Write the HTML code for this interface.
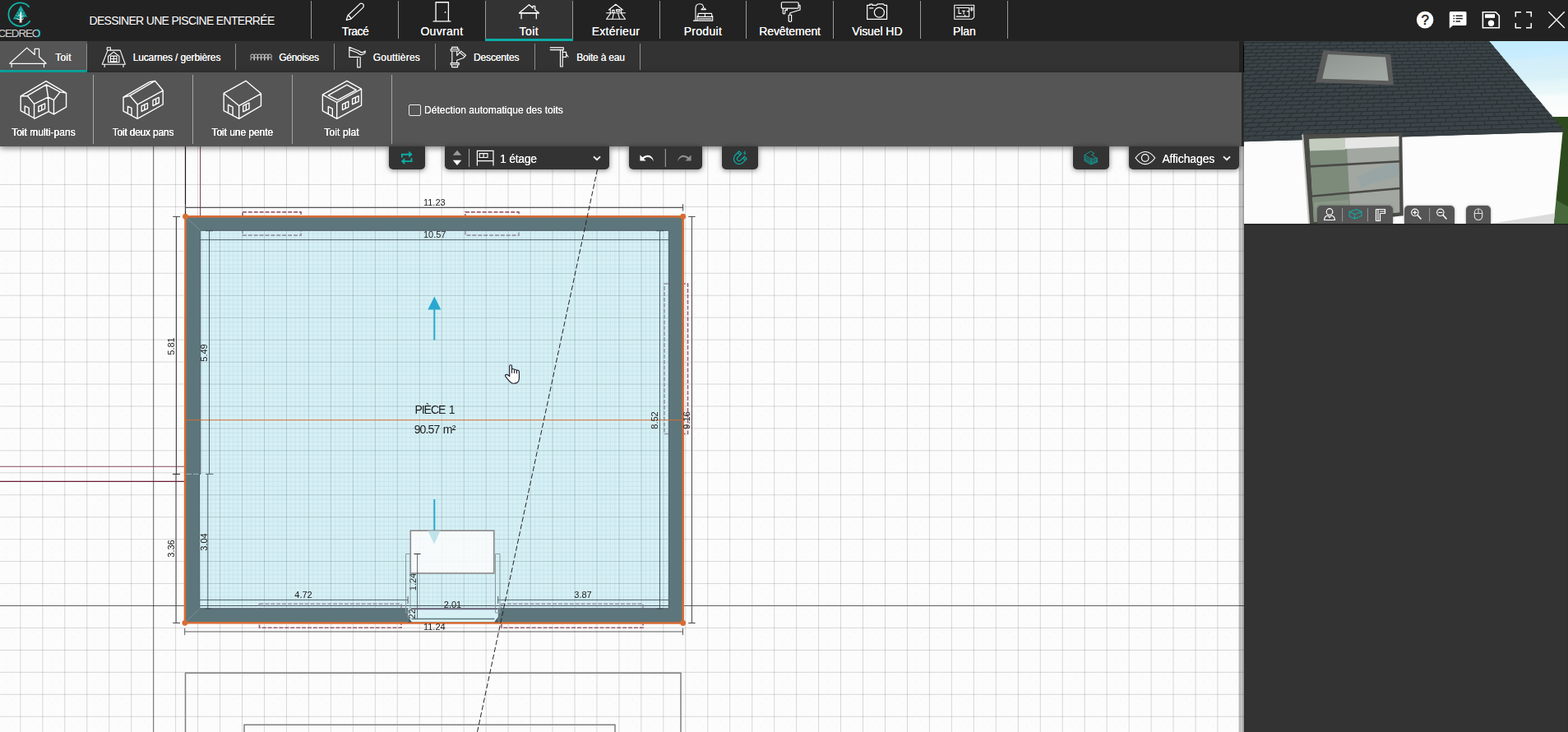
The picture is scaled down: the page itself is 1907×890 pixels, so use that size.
<!DOCTYPE html>
<html lang="fr">
<head>
<meta charset="utf-8">
<title>Cedreo - Dessiner une piscine enterrée</title>
<style>
*{box-sizing:border-box;margin:0;padding:0}
html,body{width:1907px;height:890px;overflow:hidden;background:#fcfcfc;font-family:"Liberation Sans",sans-serif;color:#fff}
.abs{position:absolute}
#canvas{position:absolute;left:0;top:0;width:1907px;height:890px;will-change:transform}
#topbar{position:absolute;left:0;top:0;width:1907px;height:50px;background:#222}
#subbar{position:absolute;left:0;top:50px;width:1507px;height:38px;background:#333}
#toolbar{position:absolute;left:0;top:88px;width:1510px;height:90px;background:#555;box-shadow:0 2px 7px rgba(0,0,0,.5)}
#side{position:absolute;left:1513px;top:272px;width:394px;height:618px;background:#333;box-shadow:inset 0 2px 2px -1px rgba(0,0,0,.5)}
#view3d{position:absolute;left:1513px;top:50px;width:394px;height:222px;overflow:hidden;background:#fdfdfd}
.sep{position:absolute;width:1px;background:#9a9a9a}
.tab{position:absolute;top:0;height:50px;width:106px;text-align:center}
.tab .lbl{position:absolute;left:0;right:0;top:30px;font-size:13.5px;line-height:16px;letter-spacing:-.2px;white-space:nowrap;text-shadow:0 0 .6px #fff}
.tab svg{position:absolute;left:50%;top:2px;margin-left:-14px}
.tab.on{background:#333;border-bottom:3px solid #0ba5a0}
#title{position:absolute;left:109px;top:16px;font-size:14px;line-height:18px;white-space:nowrap;letter-spacing:-.55px}
.stab{position:absolute;top:50px;height:38px}
.stab .lbl{position:absolute;top:12px;font-size:11.5px;line-height:15px;white-space:nowrap;letter-spacing:-.3px;text-shadow:0 0 .5px #fff}
.stab.on{background:#555;border-bottom:3px solid #0ba5a0}
.item{position:absolute;top:88px;height:90px;text-align:center}
.item .lbl{position:absolute;left:0;right:0;top:153px;font-size:11.5px;line-height:15px;white-space:nowrap;letter-spacing:-.35px;text-shadow:0 0 .5px #fff}
.fbtn{position:absolute;top:178px;height:28px;background:#333;border-radius:0 0 5px 5px;box-shadow:0 1px 6px rgba(0,0,0,.5)}
.vbtn{position:absolute;top:200px;height:22px;background:#555;border-radius:5px 5px 0 0;box-shadow:0 0 3px rgba(0,0,0,.4)}
</style>
</head>
<body>
<svg id="canvas" viewBox="0 0 1907 890" font-family="Liberation Sans, sans-serif">
<rect x="0" y="0" width="1907" height="890" fill="#fcfcfc"/>
<defs><pattern id="dots" x="186.65" y="736.5" width="26.965" height="26.95" patternUnits="userSpaceOnUse"><path d="M10.3 10.8h1v1h-1zM21.1 10.8h1v1h-1zM10.300 21.600h1v1h-1zM15.700 5.400h1v1h-1z" fill="#000" fill-opacity=".06"/></pattern></defs>
<rect x="0" y="178" width="1507" height="712" fill="url(#dots)"/>
<path d="M-2.10 178V890M24.86 178V890M51.83 178V890M78.79 178V890M105.76 178V890M132.72 178V890M159.69 178V890M213.62 178V890M240.58 178V890M267.55 178V890M294.51 178V890M321.48 178V890M348.44 178V890M375.40 178V890M402.37 178V890M429.34 178V890M456.30 178V890M483.26 178V890M510.23 178V890M537.20 178V890M564.16 178V890M591.12 178V890M618.09 178V890M645.05 178V890M672.02 178V890M698.99 178V890M725.95 178V890M752.91 178V890M779.88 178V890M806.85 178V890M833.81 178V890M860.77 178V890M887.74 178V890M914.70 178V890M941.67 178V890M968.63 178V890M995.60 178V890M1022.56 178V890M1049.53 178V890M1076.50 178V890M1103.46 178V890M1130.42 178V890M1157.39 178V890M1184.36 178V890M1211.32 178V890M1238.29 178V890M1265.25 178V890M1292.22 178V890M1319.18 178V890M1346.14 178V890M1373.11 178V890M1400.08 178V890M1427.04 178V890M1454.01 178V890M1480.97 178V890M1507.94 178V890M1534.90 178V890M0 170.55H1513M0 224.45H1513M0 251.40H1513M0 278.35H1513M0 305.30H1513M0 332.25H1513M0 359.20H1513M0 386.15H1513M0 413.10H1513M0 440.05H1513M0 467.00H1513M0 493.95H1513M0 520.90H1513M0 547.85H1513M0 574.80H1513M0 601.75H1513M0 628.70H1513M0 655.65H1513M0 682.60H1513M0 709.55H1513M0 763.45H1513M0 790.40H1513M0 817.35H1513M0 844.30H1513M0 871.25H1513M0 898.20H1513" stroke="#000" stroke-opacity=".145" stroke-width="1" fill="none"/>
<path d="M186.70 178V890M0 736.50H1513" stroke="#000" stroke-opacity=".62" stroke-width="1" fill="none"/>
<rect x="295" y="257.9" width="71.1" height="28.2" fill="none" stroke="#8a4a66" stroke-opacity=".88" stroke-width="1.6" stroke-dasharray="4.9 2"/><rect x="566" y="257.9" width="65.0" height="28.2" fill="none" stroke="#8a4a66" stroke-opacity=".88" stroke-width="1.6" stroke-dasharray="4.9 2"/><rect x="808" y="345" width="28.5" height="182.5" fill="none" stroke="#8a4a66" stroke-opacity=".88" stroke-width="1.6" stroke-dasharray="4.9 2"/><rect x="315.5" y="734.3" width="172.5" height="28.9" fill="none" stroke="#8a4a66" stroke-opacity=".88" stroke-width="1.6" stroke-dasharray="4.9 2"/><rect x="610" y="734.3" width="172.0" height="28.9" fill="none" stroke="#8a4a66" stroke-opacity=".88" stroke-width="1.6" stroke-dasharray="4.9 2"/>
<defs><clipPath id="rc"><polygon points="243.7,280.3 813.4,280.3 813.4,739.8 242.8,739.8 242.6,576.4 243.8,576.4"/></clipPath></defs>
<polygon points="243.7,280.3 813.4,280.3 813.4,739.8 242.8,739.8 242.6,576.4 243.8,576.4" fill="#d6f0f5"/>
<path clip-path="url(#rc)" d="M235.17 280V740M245.96 280V740M251.35 280V740M256.75 280V740M262.14 280V740M272.93 280V740M278.32 280V740M283.72 280V740M289.11 280V740M299.90 280V740M305.29 280V740M310.69 280V740M316.08 280V740M326.87 280V740M332.27 280V740M337.66 280V740M343.06 280V740M353.84 280V740M359.24 280V740M364.63 280V740M370.03 280V740M380.82 280V740M386.21 280V740M391.61 280V740M397.00 280V740M407.79 280V740M413.18 280V740M418.58 280V740M423.97 280V740M434.76 280V740M440.15 280V740M445.55 280V740M450.94 280V740M461.73 280V740M467.13 280V740M472.52 280V740M477.92 280V740M488.70 280V740M494.10 280V740M499.49 280V740M504.89 280V740M515.68 280V740M521.07 280V740M526.47 280V740M531.86 280V740M542.65 280V740M548.04 280V740M553.44 280V740M558.83 280V740M569.62 280V740M575.01 280V740M580.41 280V740M585.80 280V740M596.59 280V740M601.99 280V740M607.38 280V740M612.78 280V740M623.56 280V740M628.96 280V740M634.35 280V740M639.75 280V740M650.54 280V740M655.93 280V740M661.33 280V740M666.72 280V740M677.51 280V740M682.90 280V740M688.30 280V740M693.69 280V740M704.48 280V740M709.87 280V740M715.27 280V740M720.66 280V740M731.45 280V740M736.85 280V740M742.24 280V740M747.64 280V740M758.42 280V740M763.82 280V740M769.21 280V740M774.61 280V740M785.40 280V740M790.79 280V740M796.19 280V740M801.58 280V740M812.37 280V740M817.76 280V740M242 283.99H814M242 289.37H814M242 294.76H814M242 300.14H814M242 310.92H814M242 316.30H814M242 321.69H814M242 327.07H814M242 337.85H814M242 343.23H814M242 348.62H814M242 354.00H814M242 364.78H814M242 370.16H814M242 375.55H814M242 380.93H814M242 391.71H814M242 397.09H814M242 402.48H814M242 407.86H814M242 418.64H814M242 424.02H814M242 429.41H814M242 434.79H814M242 445.57H814M242 450.95H814M242 456.34H814M242 461.72H814M242 472.50H814M242 477.88H814M242 483.27H814M242 488.65H814M242 499.43H814M242 504.81H814M242 510.20H814M242 515.58H814M242 526.36H814M242 531.74H814M242 537.13H814M242 542.51H814M242 553.29H814M242 558.67H814M242 564.06H814M242 569.44H814M242 580.22H814M242 585.60H814M242 590.99H814M242 596.37H814M242 607.15H814M242 612.53H814M242 617.92H814M242 623.30H814M242 634.08H814M242 639.46H814M242 644.85H814M242 650.23H814M242 661.01H814M242 666.39H814M242 671.78H814M242 677.16H814M242 687.94H814M242 693.32H814M242 698.71H814M242 704.09H814M242 714.87H814M242 720.25H814M242 725.64H814M242 731.02H814M242 741.80H814" stroke="#b4d6de" stroke-opacity=".34" stroke-width="1" fill="none"/>
<path clip-path="url(#rc)" d="M213.59 280V740M240.56 280V740M267.53 280V740M294.51 280V740M321.48 280V740M348.45 280V740M375.42 280V740M402.39 280V740M429.37 280V740M456.34 280V740M483.31 280V740M510.28 280V740M537.25 280V740M564.23 280V740M591.20 280V740M618.17 280V740M645.14 280V740M672.11 280V740M699.09 280V740M726.06 280V740M753.03 280V740M780.00 280V740M806.97 280V740M833.95 280V740M242 278.60H814M242 305.53H814M242 332.46H814M242 359.39H814M242 386.32H814M242 413.25H814M242 440.18H814M242 467.11H814M242 494.04H814M242 520.97H814M242 547.90H814M242 574.83H814M242 601.76H814M242 628.69H814M242 655.62H814M242 682.55H814M242 709.48H814M242 736.41H814M242 763.34H814" stroke="#62838a" stroke-opacity=".33" stroke-width="1" fill="none"/>
<path clip-path="url(#rc)" d="M242 736.50H814" stroke="#3f4f55" stroke-opacity=".9" stroke-width="1" fill="none"/>
<path d="M243.6 178V262M0 567.2H224" stroke="#86485f" stroke-width="1.1" fill="none"/><path d="M0 585.4H224" stroke="#6a1c36" stroke-width="1.2" fill="none"/>
<path d="M225.5 178V262" stroke="#2a0f1c" stroke-width="1.2" fill="none"/>
<path d="M225.5 891V818.3H828V891M297 891V881.3H748V891" stroke="#7f7f7f" stroke-width="1.5" fill="none"/>
<g clip-path="url(#rc)" opacity=".9"><rect x="295" y="257.9" width="71.1" height="28.2" fill="none" stroke="#887c96" stroke-opacity=".88" stroke-width="1.6" stroke-dasharray="4.9 2"/><rect x="566" y="257.9" width="65.0" height="28.2" fill="none" stroke="#887c96" stroke-opacity=".88" stroke-width="1.6" stroke-dasharray="4.9 2"/><rect x="808" y="345" width="28.5" height="182.5" fill="none" stroke="#887c96" stroke-opacity=".88" stroke-width="1.6" stroke-dasharray="4.9 2"/><rect x="315.5" y="734.3" width="172.5" height="28.9" fill="none" stroke="#887c96" stroke-opacity=".88" stroke-width="1.6" stroke-dasharray="4.9 2"/><rect x="610" y="734.3" width="172.0" height="28.9" fill="none" stroke="#887c96" stroke-opacity=".88" stroke-width="1.6" stroke-dasharray="4.9 2"/></g>
<path d="M225.5 263.2 L830.7 263.2 L830.7 757.5 L224.9 757.3 Z M243.7 280.3 L813.4 280.3 L813.4 739.8 L242.8 739.8 L242.6 576.4 L243.8 576.4 Z" fill="#5d767b" fill-rule="evenodd"/>
<polygon points="243.7,280.3 813.4,280.3 813.4,739.8 242.8,739.8 242.6,576.4 243.8,576.4" fill="none" stroke="#4d5a68" stroke-width="1"/>
<path d="M226 264L243.7 280.3M224.9 757.3L242.8 739.8" stroke="#8b9fa3" stroke-width=".6" fill="none"/>
<rect x="496.3" y="739.3" width="109.5" height="17" fill="#d6f0f5"/>
<polygon points="225.5,263.2 830.7,263.2 830.7,757.5 224.9,757.3" fill="none" stroke="#d96c33" stroke-width="2.5"/>
<circle cx="225.5" cy="263.2" r="3.4" fill="#d96c33"/>
<circle cx="830.7" cy="263.2" r="3.4" fill="#d96c33"/>
<circle cx="830.7" cy="757.5" r="3.4" fill="#d96c33"/>
<circle cx="224.9" cy="757.3" r="3.4" fill="#d96c33"/>
<path d="M226 510.8H830" stroke="#d96c33" stroke-width="1.1" fill="none"/>
<path d="M225.5 252.4H830.6M225.5 248.20000000000002v8.4M830.6 248.20000000000002v8.4" stroke="#444" stroke-width="1" fill="none"/>
<path d="M224.7 768.0H830.5M224.7 763.8v8.4M830.5 763.8v8.4" stroke="#5a5a5a" stroke-width="1" fill="none"/>
<path d="M214.5 263.4V576.4M214.5 263.4h0M214.5 576.4h0" stroke="#444" stroke-width="1" fill="none"/>
<path d="M214.1 576.4V757.4M214.1 576.4h0M214.1 757.4h0" stroke="#444" stroke-width="1" fill="none"/>
<path d="M210.2 263.4h8.8M210.2 757.4h8.8" stroke="#444" stroke-width="1" fill="none"/>
<path d="M841.4 263.4V757.5M837.1999999999999 263.4h8.4M837.1999999999999 757.5h8.4" stroke="#444" stroke-width="1" fill="none"/>
<path d="M210 576.4h9" stroke="#1c1c1c" stroke-width="1" fill="none"/><path d="M226.500 576.400H243.500" stroke="#a3b3b6" stroke-width="1" stroke-dasharray="6.500 2" fill="none"/>
<path d="M244 291.6H813M254.5 281V576M250 576.4h9.5M252.8 576.4V740M249 740.2h8M802.5 281V740M798.5 740.2h8M250 280.7h9M798 280.7h9" stroke="#3d4a55" stroke-opacity=".85" stroke-width="1" fill="none"/>
<path d="M243 729.4H496.1M605.7 729.4H813M496.1 725v9M605.7 725v9" stroke="#3d4a55" stroke-opacity=".85" stroke-width="1" fill="none"/>
<text x="528.3" y="250" font-size="11" text-anchor="middle" fill="#1c1c1c">11.23</text>
<text x="528.7" y="289" font-size="11" text-anchor="middle" fill="#1c1c1c">10.57</text>
<text x="528.3" y="766" font-size="11" text-anchor="middle" fill="#1c1c1c">11.24</text>
<text x="369" y="727" font-size="11" text-anchor="middle" fill="#1c1c1c">4.72</text>
<text x="709" y="727" font-size="11" text-anchor="middle" fill="#1c1c1c">3.87</text>
<text x="550.5" y="739" font-size="11" text-anchor="middle" fill="#1c1c1c">2.01</text>
<text x="212" y="421" font-size="11" text-anchor="middle" fill="#1c1c1c" transform="rotate(-90 212 421)">5.81</text>
<text x="252" y="429" font-size="11" text-anchor="middle" fill="#1c1c1c" transform="rotate(-90 252 429)">5.49</text>
<text x="212" y="667" font-size="11" text-anchor="middle" fill="#1c1c1c" transform="rotate(-90 212 667)">3.36</text>
<text x="251.5" y="659" font-size="11" text-anchor="middle" fill="#1c1c1c" transform="rotate(-90 251.5 659)">3.04</text>
<text x="800" y="511" font-size="11" text-anchor="middle" fill="#1c1c1c" transform="rotate(-90 800 511)">8.52</text>
<text x="839" y="511" font-size="11" text-anchor="middle" fill="#1c1c1c" transform="rotate(-90 839 511)">9.16</text>
<text x="505.5" y="707.5" font-size="11" text-anchor="middle" fill="#1c1c1c" transform="rotate(-90 505.5 707.5)">1.24</text>
<text x="505" y="748" font-size="11" text-anchor="middle" fill="#1c1c1c" transform="rotate(-90 505 748)">.22</text>
<text x="528.5" y="503" font-size="14" text-anchor="middle" fill="#1c1c1c" letter-spacing="-1.05" word-spacing="1.68">PIÈCE 1</text>
<text x="528.6" y="527.3" font-size="14" text-anchor="middle" fill="#1c1c1c" letter-spacing="-0.85" word-spacing="1.36">90.57 m²</text>
<path d="M528.3 413.5V375" stroke="#2aa7d0" stroke-width="2" fill="none"/><path d="M528.3 360.5L520.3 376.5H536.3Z" fill="#2aa7d0"/>
<path d="M528.3 607V645" stroke="#2aa7d0" stroke-width="2" fill="none"/>
<rect x="499.3" y="645.2" width="101.5" height="51.8" fill="#fcfcfc" fill-opacity=".88" stroke="#8a8a8a" stroke-width="1.6"/>
<path d="M520.5 645.5H535.5L528 661.5Z" fill="#bfe3ea"/>
<path d="M493.5 673.5h5.5V745h-5.5ZM602.5 673.5h5.5V745h-5.5Z" fill="none" stroke="#8a9a9e" stroke-width="1"/>
<path d="M507.5 673.5V752" stroke="#4d5a62" stroke-opacity=".85" stroke-width="1" fill="none"/><path d="M503.5 673.5h8M503.6 740.3h7.600" stroke="#2a3238" stroke-width="1" fill="none"/>
<path d="M500 740.3H605.5" stroke="#6a6478" stroke-width="2" fill="none"/>
<rect x="500.5" y="753" width="101" height="3" fill="#dcf6fa"/><path d="M500.5 752.500H601.500" stroke="#5d767b" stroke-width="1.400" fill="none"/><path d="M496.300 757L496.300 750L501 756.500ZM605.800 757V750L601 756.500Z" fill="#4a5a5f"/>
<path d="M726.5 206L580.5 890" stroke="#222" stroke-width="1" stroke-dasharray="6.2 2.8" fill="none"/>
<path d="M619.7 456.8V445Q619.7 443.7 621.1 443.7Q622.5 443.7 622.5 445V448.7Q624 448.1 625.5 449.3Q627 448.9 628.4 450.3Q631.4 449.7 631.4 452.2V460Q631.4 463 629.4 465Q627 466.5 624 466.2Q621.5 466 619.2 463.2L614.9 457.9Q613.9 456.4 615.3 455.6Q616.7 455 617.9 456L619.7 457.6Z" fill="#fcfcfc" stroke="#1c1c2c" stroke-width="1.15" stroke-linejoin="round"/>
<path d="M622.5 448.7V453.8M625.5 449.6V453.8M628.4 450.6V454.2" stroke="#1c1c2c" stroke-width="1.1" fill="none"/>
<defs><linearGradient id="edge" x1="0" x2="1" y1="0" y2="0"><stop offset="0" stop-color="#000" stop-opacity="0"/><stop offset=".14" stop-color="#000" stop-opacity=".2"/><stop offset=".6" stop-color="#000" stop-opacity=".22"/><stop offset="1" stop-color="#1a2a1a" stop-opacity=".48"/></linearGradient></defs>
<rect x="1506" y="178" width="7" height="712" fill="url(#edge)"/>
</svg>

<div id="topbar">
<svg class="abs" style="left:0;top:0" width="60" height="50" viewBox="0 0 60 50" fill="none"><path d="M35.6 8.6A14.2 14.2 0 1 0 36.6 25.2" stroke="#12b3ab" stroke-width="1.8" fill="none"/><path d="M25.3 6.8L33.2 20.8L29 21.3L25.3 24L20 23.6L15.8 23.2Z" fill="#14a9a2"/><path d="M21.2 13.2L24.3 15M19.3 16.6L24 19M17.6 19.8L23.5 22.4M29.2 13.6L26.4 15.2M30.8 16.8L26.600 19.500M32.500 19.600L27 22.800" stroke="#222" stroke-width=".7"/><path d="M25.3 19.5L22 18M25.3 21L28.6 18.6M25.3 24.5L20.5 22.800M25.3 24.500L28.800 22.600" stroke="#eee" stroke-width="1"/><path d="M24.600 14.200h1.500l.500 13.300h-3z" fill="#f2f2f2"/></svg>
<span class="abs" style="left:-2.6px;top:33px;font-size:13.4px;line-height:15px;letter-spacing:-1.1px;color:#d2d2d2;white-space:nowrap;">CEDREO</span>
<svg class="abs" style="left:40px;top:33px" width="12" height="15" viewBox="40 33 12 15" fill="none"><path d="M44.600 35.900Q48.600 36.400 48.600 40.400Q48.600 44.400 44.600 44.900" stroke="#12b3ab" stroke-width="1.300" fill="none"/></svg>
<span class="abs" style="left:108.47px;top:17px;font-size:14px;line-height:16px;letter-spacing:-0.688px;font-weight:400;color:#fff;white-space:nowrap;">DESSINER UNE PISCINE ENTERRÉE</span>
<div class="abs" style="left:590px;top:0;width:106.5px;height:50px;background:#333;border-bottom:3px solid #0cada6"></div>
<div class="sep" style="left:378px;top:1px;height:46px"></div>
<div class="sep" style="left:484px;top:1px;height:46px"></div>
<div class="sep" style="left:590px;top:1px;height:46px"></div>
<div class="sep" style="left:696px;top:1px;height:46px"></div>
<div class="sep" style="left:802px;top:1px;height:46px"></div>
<div class="sep" style="left:907px;top:1px;height:46px"></div>
<div class="sep" style="left:1013px;top:1px;height:46px"></div>
<div class="sep" style="left:1119px;top:1px;height:46px"></div>
<div class="sep" style="left:1225px;top:1px;height:46px"></div>
<span class="abs" style="left:415.65px;top:30px;font-size:14px;line-height:16px;letter-spacing:-0.544px;font-weight:400;color:#fff;white-space:nowrap;text-shadow:0 0 .5px #fff">Tracé</span>
<span class="abs" style="left:511.38px;top:30px;font-size:14px;line-height:16px;letter-spacing:0.312px;font-weight:400;color:#fff;white-space:nowrap;text-shadow:0 0 .5px #fff">Ouvrant</span>
<span class="abs" style="left:631.55px;top:30px;font-size:14px;line-height:16px;letter-spacing:0.467px;font-weight:400;color:#fff;white-space:nowrap;text-shadow:0 0 .5px #fff">Toit</span>
<span class="abs" style="left:719.67px;top:30px;font-size:14px;line-height:16px;letter-spacing:0.272px;font-weight:400;color:#fff;white-space:nowrap;text-shadow:0 0 .5px #fff">Extérieur</span>
<span class="abs" style="left:831.67px;top:30px;font-size:14px;line-height:16px;letter-spacing:0.296px;font-weight:400;color:#fff;white-space:nowrap;text-shadow:0 0 .5px #fff">Produit</span>
<span class="abs" style="left:923.17px;top:30px;font-size:14px;line-height:16px;letter-spacing:-0.072px;font-weight:400;color:#fff;white-space:nowrap;text-shadow:0 0 .5px #fff">Revêtement</span>
<span class="abs" style="left:1036.17px;top:30px;font-size:14px;line-height:16px;letter-spacing:-0.081px;font-weight:400;color:#fff;white-space:nowrap;text-shadow:0 0 .5px #fff">Visuel HD</span>
<span class="abs" style="left:1158.97px;top:30px;font-size:14px;line-height:16px;letter-spacing:-0.067px;font-weight:400;color:#fff;white-space:nowrap;text-shadow:0 0 .5px #fff">Plan</span>
<svg class="abs" style="left:0px;top:0px;overflow:visible" width="80" height="60" fill="none" stroke="#fff" stroke-linecap="round" stroke-linejoin="round"><g transform="translate(370 0) scale(0.12484)" stroke-width="9.61"><path d="M410 195L425 150L545 35Q565 28 578 45Q582 62 572 75L455 185ZM425 150Q448 152 455 185M436 158L452 172" /></g></svg>
<svg class="abs" style="left:0px;top:0px;overflow:visible" width="80" height="60" fill="none" stroke="#fff" stroke-linecap="round" stroke-linejoin="round"><g transform="translate(370 0) scale(0.12484)" stroke-width="10.41"><path d="M1282 205V22H1405V205M1258 208H1425" /><circle cx="1374" cy="120" r="7" fill="#fff" stroke="none"/></g></svg>
<svg class="abs" style="left:0px;top:0px;overflow:visible" width="80" height="60" fill="none" stroke="#fff" stroke-linecap="round" stroke-linejoin="round"><g transform="translate(590 0) scale(0.12585)" stroke-width="10.33"><path d="M330 125L425 45L462 78V58H482V95L520 125ZM330 127H520M350 130V180M495 130V180" /></g></svg>
<svg class="abs" style="left:0px;top:0px;overflow:visible" width="80" height="60" fill="none" stroke="#fff" stroke-linecap="round" stroke-linejoin="round"><g transform="translate(590 0) scale(0.12585)" stroke-width="8.74"><path d="M1195 95L1262 42L1330 95M1210 90V125M1315 90V125M1172 125H1355M1230 125V98H1248V125M1268 92H1302V108H1268ZM1172 185L1212 130M1355 185L1315 130M1172 185H1355M1230 185L1242 130M1300 185L1285 130" /></g></svg>
<svg class="abs" style="left:0px;top:0px;overflow:visible" width="80" height="60" fill="none" stroke="#fff" stroke-linecap="round" stroke-linejoin="round"><g transform="translate(800 0) scale(0.12585)" stroke-width="8.74"><path d="M365 200V85Q365 38 405 38Q440 38 442 75M420 92Q442 62 465 92ZM345 200H390M390 160V135Q390 130 396 130H516Q522 130 522 136V160M390 162H522M382 155V200H530V155M456 132V160M395 182H517" /></g></svg>
<svg class="abs" style="left:0px;top:0px;overflow:visible" width="80" height="60" fill="none" stroke="#fff" stroke-linecap="round" stroke-linejoin="round"><g transform="translate(800 0) scale(0.12585)" stroke-width="9.54"><path d="M1205 22H1350Q1360 22 1360 32V70Q1360 80 1350 80H1205Q1195 80 1195 70V32Q1195 22 1205 22ZM1360 50H1375V95L1278 125V145M1265 145H1292V205Q1278 215 1265 205ZM1210 82V130Q1220 138 1230 130V100Q1240 92 1250 100V82" /></g></svg>
<svg class="abs" style="left:0px;top:0px;overflow:visible" width="80" height="60" fill="none" stroke="#fff" stroke-linecap="round" stroke-linejoin="round"><g transform="translate(1010 0) scale(0.12585)" stroke-width="9.54"><path d="M355 50H381V40H405V50H445L455 38H512L521 50H545V185H355ZM378 78H412" /><circle cx="472" cy="120" r="48"/></g></svg>
<svg class="abs" style="left:0px;top:0px;overflow:visible" width="80" height="60" fill="none" stroke="#fff" stroke-linecap="round" stroke-linejoin="round"><g transform="translate(1010 0) scale(0.12585)" stroke-width="8.74"><path d="M1198 50H1388V165L1368 185H1198ZM1218 75H1340V160H1218M1240 85V130H1262M1275 105H1300M1288 105V135M1320 110H1335M1300 160V145M1352 80H1378M1352 95H1378M1365 70V105" /></g></svg>
<svg class="abs" style="left:1720px;top:10px" width="187" height="30" viewBox="1720 10 187 30"><circle cx="1733.1" cy="24.1" r="10.3" fill="#fff"/><text x="1733.2" y="30.2" font-size="17" text-anchor="middle" fill="#222" stroke="#222" stroke-width=".5" font-family="Liberation Sans, sans-serif">?</text><path d="M1764.3 14H1782q1.500 0 1.500 1.500V29.500q0 1.500 -1.500 1.500H1767l-4.200 3.600V15.500q0-1.500 1.500-1.500Z" fill="#fff"/><path d="M1767.500 19.300h1.600M1770.500 19.300h8.300M1767.500 22.600h1.600M1770.500 22.600h8.300M1767.500 25.900h1.600M1770.500 25.900h5.500" stroke="#222" stroke-width="1.500" fill="none"/><path d="M1803.400 14.700H1819l4.300 4.300V33.700H1803.400Z" fill="none" stroke="#fff" stroke-width="1.600"/><rect x="1806" y="17.200" width="12" height="4.600" fill="#fff"/><circle cx="1813.500" cy="28.300" r="3.700" fill="#fff"/><path d="M1843.300 20.500V14.800H1850M1856 14.800H1862.200V20.500M1862.200 28V33.700H1856M1850 33.700H1843.300V28" fill="none" stroke="#fff" stroke-width="1.500"/><path d="M1883.300 14.200L1902.800 34M1902.800 14.200L1883.300 34" stroke="#fff" stroke-width="1.300" fill="none"/></svg>
</div>
<div class="abs" style="left:1507px;top:50px;width:6px;height:38px;background:#222"></div>
<div class="abs" style="left:1512px;top:55px;width:1px;height:33px;background:#000"></div>
<div class="abs" style="left:1510px;top:88px;width:3px;height:90px;background:#333"></div>
<div id="subbar"></div>
<div class="abs" style="left:0;top:50px;width:106px;height:38px;background:#555;border-bottom:3px solid #0cada6"></div>
<div class="sep" style="left:104.9px;top:53px;height:31.5px;background:#8e8e8e"></div>
<div class="sep" style="left:285.7px;top:53px;height:31.5px;background:#8e8e8e"></div>
<div class="sep" style="left:405.9px;top:53px;height:31.5px;background:#8e8e8e"></div>
<div class="sep" style="left:528.9px;top:53px;height:31.5px;background:#8e8e8e"></div>
<div class="sep" style="left:649.9px;top:53px;height:31.5px;background:#8e8e8e"></div>
<div class="sep" style="left:778.1px;top:53px;height:31.5px;background:#8e8e8e"></div>
<span class="abs" style="left:67.35px;top:63px;font-size:12px;line-height:14px;letter-spacing:0.175px;font-weight:400;color:#fff;white-space:nowrap;text-shadow:0 0 .5px #fff">Toit</span>
<span class="abs" style="left:161.70px;top:63px;font-size:12px;line-height:14px;letter-spacing:-0.142px;font-weight:400;color:#fff;white-space:nowrap;text-shadow:0 0 .5px #fff">Lucarnes / gerbières</span>
<span class="abs" style="left:339.28px;top:63px;font-size:12px;line-height:14px;letter-spacing:-0.289px;font-weight:400;color:#fff;white-space:nowrap;text-shadow:0 0 .5px #fff">Génoises</span>
<span class="abs" style="left:453.78px;top:63px;font-size:12px;line-height:14px;letter-spacing:0.181px;font-weight:400;color:#fff;white-space:nowrap;text-shadow:0 0 .5px #fff">Gouttières</span>
<span class="abs" style="left:576.10px;top:63px;font-size:12px;line-height:14px;letter-spacing:-0.156px;font-weight:400;color:#fff;white-space:nowrap;text-shadow:0 0 .5px #fff">Descentes</span>
<span class="abs" style="left:701.30px;top:63px;font-size:12px;line-height:14px;letter-spacing:-0.217px;font-weight:400;color:#fff;white-space:nowrap;text-shadow:0 0 .5px #fff">Boite à eau</span>
<svg class="abs" style="left:0px;top:0px;overflow:visible" width="80" height="60" fill="none" stroke="#fff" stroke-linecap="round" stroke-linejoin="round"><g transform="translate(0 0) scale(0.12585)" stroke-width="9.54"><path d="M95 612L260 462L335 528V472H378V548L445 612M95 615H445M112 618V648M425 618V648" /></g></svg>
<svg class="abs" style="left:0px;top:0px;overflow:visible" width="80" height="60" fill="none" stroke="#fff" stroke-linecap="round" stroke-linejoin="round"><g transform="translate(100 48) scale(0.16779)" stroke-width="6.56"><path d="M145 180L185 78H275L312 180ZM162 180V200M298 180V200M180 75V58H205V75M188 122L228 90L268 122V165H188ZM205 120H250V160H205ZM228 120V160M205 140H250" /></g></svg>
<svg class="abs" style="left:0;top:50px" width="800" height="38" viewBox="0 50 800 38" fill="none" stroke="#fff" stroke-width="1.1" stroke-linecap="round" stroke-linejoin="round"><path d="M305.0 69.3V67.6Q305.0 66.0 307.1 66.0Q309.2 66.0 309.2 67.6V69.3M309.2 69.3V67.6Q309.2 66.0 311.3 66.0Q313.4 66.0 313.4 67.6V69.3M313.4 69.3V67.6Q313.4 66.0 315.5 66.0Q317.6 66.0 317.6 67.6V69.3M317.6 69.3V67.6Q317.6 66.0 319.7 66.0Q321.8 66.0 321.8 67.6V69.3M321.8 69.3V67.6Q321.8 66.0 323.9 66.0Q326.0 66.0 326.0 67.6V69.3M326.0 69.3V67.6Q326.0 66.0 328.1 66.0Q330.2 66.0 330.2 67.6V69.3M305.0 72.9V71.39999999999999Q305.0 69.8 307.1 69.8Q309.2 69.8 309.2 71.39999999999999V72.9M309.2 72.9V71.39999999999999Q309.2 69.8 311.3 69.8Q313.4 69.8 313.4 71.39999999999999V72.9M313.4 72.9V71.39999999999999Q313.4 69.8 315.5 69.8Q317.6 69.8 317.6 71.39999999999999V72.9M317.6 72.9V71.39999999999999Q317.6 69.8 319.7 69.8Q321.8 69.8 321.8 71.39999999999999V72.9M321.8 72.9V71.39999999999999Q321.8 69.8 323.9 69.8Q326.0 69.8 326.0 71.39999999999999V72.9M326.0 72.9V71.39999999999999Q326.0 69.8 328.1 69.8Q330.2 69.8 330.2 71.39999999999999V72.9" stroke="#e8e8e8" stroke-width=".9"/><path d="M424.8 57.3V69.3H436.8M424.8 57.3L437.2 62.2Q439.6 65.6 444.3 62M425.2 60.6L435 64.3Q438.8 68.6 443.9 64.6M444.3 62L443.9 64.6M434.7 71V81.8H438.2V69.2" stroke-width="1.15"/><path d="M549.6 57.4H556.6V59.8H549.6ZM548.2 59.8H558.2V62H548.2ZM549.8 62V76.6M555.7 62V67.6M555.7 73.2V76.6M548.2 76.6H558.2V78.8H548.2ZM549.6 78.8H556.6V81.6H549.6ZM555.7 67.6L560.6 62.2L566.6 67.2L563.6 70.6L555.7 73.2M559.2 63.8L565.200 68.800" stroke-width="1.1"/><path d="M669.2 57.9H685.3V60.6H669.2M681.5 60.6V81M684.2 60.6V81M681.5 81H684.2M684.2 63.4H688.6V69.300H684.200M688.600 65.500L691 69" stroke-width="1.150"/></svg>
<div id="toolbar"></div>
<div class="sep" style="left:112.9px;top:91px;height:84px;background:#a5a5a5"></div>
<div class="sep" style="left:233.7px;top:91px;height:84px;background:#a5a5a5"></div>
<div class="sep" style="left:354.9px;top:91px;height:84px;background:#a5a5a5"></div>
<div class="sep" style="left:475.7px;top:91px;height:84px;background:#a5a5a5"></div>
<span class="abs" style="left:14.15px;top:154px;font-size:12px;line-height:14px;letter-spacing:0.011px;font-weight:400;color:#fff;white-space:nowrap;text-shadow:0 0 .6px #fff,0 0 .6px #fff">Toit multi-pans</span>
<span class="abs" style="left:136.65px;top:154px;font-size:12px;line-height:14px;letter-spacing:-0.196px;font-weight:400;color:#fff;white-space:nowrap;text-shadow:0 0 .6px #fff,0 0 .6px #fff">Toit deux pans</span>
<span class="abs" style="left:257.45px;top:154px;font-size:12px;line-height:14px;letter-spacing:-0.056px;font-weight:400;color:#fff;white-space:nowrap;text-shadow:0 0 .6px #fff,0 0 .6px #fff">Toit une pente</span>
<span class="abs" style="left:394.35px;top:154px;font-size:12px;line-height:14px;letter-spacing:0.125px;font-weight:400;color:#fff;white-space:nowrap;text-shadow:0 0 .6px #fff,0 0 .6px #fff">Toit plat</span>
<span class="abs" style="left:516.10px;top:127px;font-size:12px;line-height:14px;letter-spacing:0.019px;font-weight:400;color:#fff;white-space:nowrap;text-shadow:0 0 .5px #fff">Détection automatique des toits</span>
<div class="abs" style="left:496.5px;top:126.5px;width:15px;height:14.5px;border:1.2px solid #eee;border-radius:2px"></div>
<svg class="abs" style="left:0px;top:0px;overflow:visible" width="80" height="60" fill="none" stroke="#fff" stroke-linecap="round" stroke-linejoin="round"><g transform="translate(0 88) scale(0.12585)" stroke-width="11.12"><path d="M200 230L445 85L640 200V335L520 405L470 378L335 445L200 370ZM265 226L447 118L580 190M200 230L265 226L330 305V445M330 305L465 240L520 268L580 190L640 200M447 118L465 240L470 378M520 268V405M240 390V325L280 345V412M372 330L434 300V350L372 380ZM403.0 315.0V365.0" /></g></svg>
<svg class="abs" style="left:0px;top:0px;overflow:visible" width="80" height="60" fill="none" stroke="#fff" stroke-linecap="round" stroke-linejoin="round"><g transform="translate(0 88) scale(0.12585)" stroke-width="11.12"><path d="M1192 240L1445 92L1497 82L1575 175V310L1328 448L1192 375ZM1192 240L1255 225L1328 310V448M1255 225L1497 82M1328 310L1575 175M1235 392V328L1272 345V412M1368 325L1426 297V349L1368 377ZM1397.0 311.0V363.0M1478 270L1536 242V294L1478 322ZM1507.0 256.0V308.0" /></g></svg>
<svg class="abs" style="left:0px;top:0px;overflow:visible" width="80" height="60" fill="none" stroke="#fff" stroke-linecap="round" stroke-linejoin="round"><g transform="translate(230 88) scale(0.12585)" stroke-width="11.12"><path d="M335 202L548 82L695 205L482 322ZM335 202V370L482 448V322M482 448L695 322V205M378 388V312L422 335V412M522 322L580 295V353L522 380ZM551.0 308.5V366.5" /></g></svg>
<svg class="abs" style="left:0px;top:0px;overflow:visible" width="80" height="60" fill="none" stroke="#fff" stroke-linecap="round" stroke-linejoin="round"><g transform="translate(230 88) scale(0.12585)" stroke-width="11.12"><path d="M1290 215L1525 82L1665 160L1428 290ZM1345 222L1525 120L1615 170L1435 268ZM1290 215V372L1428 448V290M1428 448L1665 318V160M1345 398V330L1385 350V420M1482 308L1540 280V334L1482 362ZM1511.0 294.0V348.0M1578 255L1638 227V281L1578 309ZM1608.0 241.0V295.0" /></g></svg>
<div class="fbtn" style="left:473px;width:44px"></div>
<div class="fbtn" style="left:541px;width:200px"></div>
<div class="fbtn" style="left:765px;width:89px"></div>
<div class="fbtn" style="left:878px;width:44px"></div>
<div class="fbtn" style="left:1305px;width:44px"></div>
<div class="fbtn" style="left:1373px;width:134px"></div>
<svg class="abs" style="left:460px;top:178px" width="1050" height="30" viewBox="460 178 1050 30" fill="none" stroke-linecap="butt" stroke-linejoin="miter"><path d="M488.9 191.6V187.7H498M489.3 196.1H500.5V192.2" stroke="#0cada6" stroke-width="1.9"/><path d="M497.2 183.6L501.6 187.7L497.2 191.8ZM492.3 192L487.9 196.1L492.3 200.2Z" fill="#0cada6"/><path d="M556 182.8L561.2 188.7H550.8Z" fill="#9a9a9a"/><path d="M550.8 194.7H561.2L556 201Z" fill="#fff"/><path d="M570.5 181V203M809.3 181V203" stroke="#aaa" stroke-width="1"/><path d="M580.4 201.5V183.3H600V201.5M580.4 195.6H600" stroke="#fff" stroke-width="1.2"/><path d="M583.2 186.6H593V191.5H583.2ZM588.1 186.6V191.5" stroke="#fff" stroke-width="1.1"/><path d="M722 190.4L726 194.2L730 190.4" stroke="#fff" stroke-width="1.9"/><path d="M1488 190.4L1492 194.2L1496 190.4" stroke="#fff" stroke-width="1.9"/><path d="M778.4 188.4V195.6H785.6L782.9 192.9Q786 190.4 789.5 191.3Q793 192.3 794.8 196.3Q794.3 190.9 790 189.1Q785.5 187.6 781.4 191.3Z" fill="#fff"/><path d="M840.6 188.4V195.6H833.4L836.100 192.900Q833 190.400 829.500 191.300Q826 192.300 824.200 196.300Q824.700 190.900 829 189.100Q833.500 187.600 837.600 191.300Z" fill="#8e8e8e"/><g transform="rotate(45 900 192)" stroke="#0cada6" stroke-width="1.200"><path d="M893.500 187V193.500A6.500 6.500 0 0 0 906.500 193.500V187H902.500V193.500A2.500 2.500 0 0 1 897.500 193.500V187ZM893.500 189.500H897.500M902.500 189.500H906.500"/></g><path d="M906.500 183.500L904.500 186H907L905 188.500" stroke="#0cada6" stroke-width="1"/><g stroke="#0cada6" stroke-width=".800"><path d="M1319 188.500L1326.500 184L1331 186.500L1327.500 188.500L1334.500 192.500V197L1327 200L1319 195.500ZM1319 188.500L1327 193L1334.500 192.500M1327 193V200"/><path d="M1319 190.500L1327 195M1319 192.500L1327 197M1319 194L1327 198.500M1327 195L1334.500 194M1327 197L1334.500 195.500M1327 198.500L1334.500 196.500" stroke-width=".700"/></g><path d="M1381 192Q1386.500 184.500 1392.800 184.500Q1399.200 184.500 1404.700 192Q1399.200 199.700 1392.800 199.700Q1386.500 199.700 1381 192Z" stroke="#fff" stroke-width="1.200"/><circle cx="1392.700" cy="192" r="4.300" stroke="#fff" stroke-width="1.200"/></svg>
<span class="abs" style="left:608.10px;top:185px;font-size:14px;line-height:16px;letter-spacing:-0.287px;font-weight:400;color:#fff;white-space:nowrap;text-shadow:0 0 .5px #fff">1 étage</span>
<span class="abs" style="left:1413.40px;top:185px;font-size:14px;line-height:16px;letter-spacing:-0.136px;font-weight:400;color:#fff;white-space:nowrap;text-shadow:0 0 .5px #fff">Affichages</span>
<div id="view3d">
<svg class="abs" style="left:0;top:0" width="394" height="222" viewBox="1513 50 394 222">
<defs><linearGradient id="sky" gradientUnits="userSpaceOnUse" x1="1860" y1="50" x2="1865.5" y2="142"><stop offset="0" stop-color="#c2ebff"/><stop offset=".2" stop-color="#c9edfe"/><stop offset=".25" stop-color="#d2eefa"/><stop offset=".5" stop-color="#d8f0f7"/><stop offset=".55" stop-color="#e3f5f9"/><stop offset=".7" stop-color="#eaf8fa"/><stop offset=".75" stop-color="#f8fcfc"/><stop offset="1" stop-color="#fcfcfc"/></linearGradient><linearGradient id="glass" x1="0" y1="0" x2="1" y2="1"><stop offset="0" stop-color="#8f9591"/><stop offset="1" stop-color="#a4aaa6"/></linearGradient><clipPath id="roofc"><polygon points="1513,50 1811.2,50 1901.5,157.5 1901,160 1513,172"/></clipPath><clipPath id="winc"><polygon points="1592.2,169 1701.3,165.7 1702.4,258.3 1598,270"/></clipPath></defs>
<rect x="1800" y="50" width="107" height="100" fill="url(#sky)"/>
<polygon points="1880,142 1907,142 1907,272 1880,272" fill="#2c4a1d"/>
<polygon points="1892,243 1907,251 1907,272 1889,272" fill="#46683a"/>
<polygon points="1513,170 1900.8,158 1889.6,272 1513,272" fill="#fcfcfc"/>
<polygon points="1812,272 1890.8,259.5 1889.6,272" fill="#dbdbdb"/>
<polygon points="1513,50 1811.2,50 1901.5,157.5 1901,160.5 1513,172.3" fill="#3b4448"/>
<g clip-path="url(#roofc)"><path d="M1513 51.90L1907 47.93M1513 56.00L1907 51.77M1513 60.16L1907 55.66M1513 64.37L1907 59.60M1513 68.62L1907 63.58M1513 72.94L1907 67.61M1513 77.30L1907 71.69M1513 81.72L1907 75.82M1513 86.19L1907 80.01M1513 90.71L1907 84.24M1513 95.30L1907 88.53M1513 99.93L1907 92.87M1513 104.63L1907 97.26M1513 109.38L1907 101.70M1513 114.20L1907 106.21M1513 119.07L1907 110.76M1513 124.00L1907 115.37M1513 128.99L1907 120.04M1513 134.04L1907 124.77M1513 139.16L1907 129.55M1513 144.33L1907 134.40M1513 149.57L1907 139.30M1513 154.88L1907 144.26M1513 160.25L1907 149.29M1513 165.69L1907 154.37M1513 171.19L1907 159.52M1513 176.76L1907 164.73M1513 182.40L1907 170.01M1513 188.11L1907 175.35" stroke="#2b3134" stroke-width="1.15" fill="none"/>
<path d="M1485.0 52.2L1480.1 56.3M1498.0 52.1L1493.3 56.2M1512.6 51.9L1508.2 56.0M1524.6 51.8L1520.4 55.9M1539.1 51.7L1535.2 55.7M1552.1 51.5L1548.4 55.6M1564.8 51.4L1561.3 55.5M1579.3 51.2L1576.0 55.3M1591.5 51.1L1588.5 55.2M1605.9 51.0L1603.1 55.0M1618.4 50.9L1615.9 54.9M1631.8 50.7L1629.6 54.7M1646.0 50.6L1644.0 54.6M1660.4 50.4L1658.6 54.4M1672.1 50.3L1670.5 54.3M1685.7 50.2L1684.4 54.2M1700.1 50.0L1699.0 54.0M1714.3 49.9L1713.4 53.8M1726.8 49.8L1726.2 53.7M1739.7 49.6L1739.4 53.6M1754.5 49.5L1754.4 53.4M1765.7 49.4L1765.8 53.3M1781.0 49.2L1781.4 53.1M1793.1 49.1L1793.7 53.0M1806.1 48.9L1807.0 52.9M1819.4 48.8L1820.5 52.7M1833.3 48.7L1834.6 52.6M1847.9 48.5L1849.5 52.4M1859.8 48.4L1861.6 52.3M1874.1 48.3L1876.2 52.1M1887.7 48.1L1890.0 52.0M1900.4 48.0L1903.0 51.8M1490.6 56.3L1485.7 60.4M1503.0 56.1L1498.4 60.3M1516.6 56.0L1512.2 60.1M1530.5 55.8L1526.3 60.0M1545.2 55.7L1541.3 59.8M1558.2 55.5L1554.5 59.7M1571.4 55.4L1568.0 59.5M1585.7 55.2L1582.5 59.3M1598.9 55.1L1596.0 59.2M1612.1 55.0L1609.4 59.0M1626.8 54.8L1624.4 58.9M1640.2 54.7L1638.0 58.7M1652.6 54.5L1650.7 58.6M1667.0 54.4L1665.3 58.4M1680.4 54.2L1679.0 58.3M1694.8 54.1L1693.6 58.1M1708.0 53.9L1707.1 57.9M1720.5 53.8L1719.8 57.8M1735.8 53.6L1735.3 57.6M1747.3 53.5L1747.0 57.5M1761.5 53.3L1761.6 57.3M1775.9 53.2L1776.2 57.2M1788.0 53.0L1788.6 57.0M1802.4 52.9L1803.2 56.9M1814.9 52.8L1815.9 56.7M1829.9 52.6L1831.2 56.5M1843.7 52.4L1845.3 56.4M1856.8 52.3L1858.6 56.2M1871.1 52.1L1873.1 56.1M1883.3 52.0L1885.6 55.9M1897.8 51.9L1900.3 55.8M1911.1 51.7L1913.9 55.6M1495.9 60.4L1491.0 64.6M1509.3 60.2L1504.7 64.4M1524.0 60.1L1519.6 64.3M1537.9 59.9L1533.8 64.1M1550.5 59.8L1546.7 63.9M1564.7 59.6L1561.1 63.8M1577.0 59.4L1573.6 63.6M1592.3 59.3L1589.2 63.4M1605.9 59.1L1603.0 63.3M1620.4 58.9L1617.8 63.1M1633.7 58.8L1631.4 62.9M1646.2 58.7L1644.1 62.8M1660.2 58.5L1658.3 62.6M1674.6 58.3L1673.0 62.4M1686.7 58.2L1685.4 62.3M1701.5 58.0L1700.4 62.1M1714.5 57.9L1713.7 61.9M1728.2 57.7L1727.6 61.8M1741.7 57.5L1741.4 61.6M1757.2 57.4L1757.1 61.4M1769.4 57.2L1769.6 61.3M1783.4 57.1L1783.8 61.1M1797.5 56.9L1798.1 60.9M1812.3 56.7L1813.3 60.7M1824.2 56.6L1825.4 60.6M1838.8 56.4L1840.2 60.4M1852.7 56.3L1854.5 60.2M1867.3 56.1L1869.2 60.1M1880.8 55.9L1883.1 59.9M1894.7 55.8L1897.2 59.7M1907.0 55.6L1909.7 59.6M1486.9 64.7L1481.8 69.0M1500.7 64.5L1495.8 68.8M1515.8 64.4L1511.2 68.6M1529.9 64.2L1525.6 68.4M1541.8 64.0L1537.8 68.3M1555.8 63.9L1552.0 68.1M1569.8 63.7L1566.3 67.9M1583.7 63.5L1580.5 67.7M1598.2 63.4L1595.2 67.6M1612.4 63.2L1609.6 67.4M1625.5 63.0L1623.0 67.2M1638.8 62.9L1636.5 67.0M1653.7 62.7L1651.7 66.8M1667.4 62.5L1665.7 66.7M1681.8 62.3L1680.4 66.5M1696.6 62.2L1695.4 66.3M1709.9 62.0L1709.0 66.1M1723.4 61.8L1722.7 65.9M1737.5 61.7L1737.1 65.8M1751.6 61.5L1751.4 65.6M1764.0 61.3L1764.1 65.4M1779.9 61.1L1780.3 65.2M1793.5 61.0L1794.1 65.0M1807.6 60.8L1808.5 64.8M1821.3 60.6L1822.5 64.7M1834.3 60.5L1835.7 64.5M1848.2 60.3L1849.8 64.3M1861.4 60.1L1863.3 64.2M1876.5 60.0L1878.7 64.0M1889.1 59.8L1891.5 63.8M1903.0 59.6L1905.7 63.6M1491.6 68.9L1486.6 73.3M1505.6 68.8L1500.8 73.1M1520.1 68.6L1515.6 72.9M1533.5 68.4L1529.2 72.7M1547.4 68.2L1543.4 72.5M1561.9 68.0L1558.1 72.3M1575.8 67.8L1572.3 72.1M1590.5 67.7L1587.3 71.9M1603.8 67.5L1600.8 71.7M1619.9 67.3L1617.2 71.5M1633.3 67.1L1630.9 71.3M1646.3 66.9L1644.1 71.1M1660.6 66.7L1658.7 71.0M1674.9 66.6L1673.3 70.8M1689.0 66.4L1687.6 70.6M1702.5 66.2L1701.4 70.4M1718.3 66.0L1717.5 70.2M1732.7 65.8L1732.2 70.0M1745.5 65.6L1745.2 69.8M1759.6 65.5L1759.6 69.6M1772.7 65.3L1773.0 69.4M1786.8 65.1L1787.4 69.2M1801.5 64.9L1802.3 69.0M1815.4 64.7L1816.4 68.8M1830.8 64.5L1832.1 68.6M1843.3 64.4L1844.8 68.5M1857.0 64.2L1858.8 68.3M1873.3 64.0L1875.4 68.1M1886.3 63.8L1888.7 67.9M1899.5 63.7L1902.1 67.7M1497.8 73.2L1492.8 77.6M1510.8 73.0L1506.1 77.4M1526.3 72.8L1521.8 77.1M1541.6 72.6L1537.4 76.9M1555.6 72.4L1551.6 76.7M1569.4 72.2L1565.8 76.5M1582.6 72.0L1579.2 76.3M1597.1 71.8L1594.0 76.1M1610.9 71.6L1608.0 75.9M1626.6 71.4L1624.0 75.7M1640.2 71.2L1637.9 75.5M1655.1 71.0L1653.0 75.3M1668.2 70.8L1666.5 75.1M1682.2 70.7L1680.7 74.9M1697.9 70.4L1696.7 74.7M1712.5 70.2L1711.6 74.5M1726.5 70.1L1725.8 74.3M1740.6 69.9L1740.2 74.1M1754.9 69.7L1754.7 73.9M1768.9 69.5L1769.1 73.7M1781.9 69.3L1782.4 73.5M1796.9 69.1L1797.6 73.3M1810.7 68.9L1811.7 73.1M1824.2 68.7L1825.4 72.9M1838.4 68.5L1839.9 72.7M1853.3 68.3L1855.1 72.4M1867.5 68.1L1869.5 72.2M1882.7 67.9L1885.1 72.0M1897.6 67.7L1900.2 71.8M1910.6 67.5L1913.5 71.6M1489.9 77.7L1484.6 82.1M1504.4 77.5L1499.4 81.9M1518.8 77.3L1514.1 81.7M1531.8 77.1L1527.3 81.5M1545.8 76.9L1541.7 81.3M1560.3 76.7L1556.4 81.0M1574.6 76.4L1571.0 80.8M1589.0 76.2L1585.7 80.6M1604.5 76.0L1601.4 80.4M1619.6 75.8L1616.8 80.1M1633.8 75.6L1631.4 79.9M1647.4 75.4L1645.2 79.7M1662.2 75.2L1660.3 79.5M1677.0 75.0L1675.4 79.3M1689.7 74.8L1688.3 79.1M1705.5 74.6L1704.4 78.8M1720.5 74.4L1719.7 78.6M1734.6 74.1L1734.1 78.4M1748.9 73.9L1748.7 78.2M1762.7 73.7L1762.8 78.0M1776.4 73.5L1776.7 77.8M1792.3 73.3L1792.9 77.5M1805.6 73.1L1806.5 77.3M1821.2 72.9L1822.3 77.1M1836.0 72.7L1837.4 76.9M1849.0 72.5L1850.8 76.7M1863.5 72.3L1865.5 76.5M1879.2 72.1L1881.5 76.2M1893.1 71.9L1895.6 76.0M1906.1 71.7L1909.0 75.8M1493.4 82.0L1488.2 86.5M1508.1 81.8L1503.1 86.3M1524.5 81.6L1519.8 86.0M1538.8 81.4L1534.5 85.8M1551.8 81.2L1547.8 85.6M1568.1 80.9L1564.3 85.4M1583.0 80.7L1579.5 85.1M1596.8 80.5L1593.6 84.9M1610.7 80.3L1607.8 84.7M1625.8 80.0L1623.1 84.4M1639.4 79.8L1637.0 84.2M1653.7 79.6L1651.6 84.0M1670.6 79.4L1668.8 83.7M1684.4 79.2L1682.9 83.5M1698.7 78.9L1697.5 83.3M1714.3 78.7L1713.4 83.0M1727.7 78.5L1727.0 82.8M1743.3 78.3L1743.0 82.6M1757.8 78.1L1757.7 82.3M1770.9 77.9L1771.1 82.1M1785.6 77.6L1786.1 81.9M1800.3 77.4L1801.1 81.7M1814.8 77.2L1815.9 81.4M1830.2 77.0L1831.6 81.2M1844.0 76.8L1845.7 81.0M1859.0 76.5L1860.9 80.7M1872.9 76.3L1875.1 80.5M1889.4 76.1L1891.9 80.3M1902.6 75.9L1905.4 80.1M1499.8 86.4L1494.6 91.0M1514.9 86.2L1510.0 90.7M1530.4 86.0L1525.8 90.5M1544.0 85.7L1539.8 90.2M1560.0 85.5L1556.0 90.0M1573.8 85.3L1570.1 89.7M1588.6 85.0L1585.2 89.5M1603.4 84.8L1600.3 89.3M1617.0 84.6L1614.1 89.0M1632.7 84.3L1630.2 88.8M1646.9 84.1L1644.7 88.5M1661.2 83.9L1659.3 88.3M1677.9 83.6L1676.3 88.0M1691.2 83.4L1689.8 87.8M1706.7 83.2L1705.6 87.5M1722.1 82.9L1721.3 87.3M1736.4 82.7L1736.0 87.0M1750.7 82.5L1750.5 86.8M1765.9 82.2L1766.0 86.6M1780.8 82.0L1781.2 86.3M1796.1 81.7L1796.8 86.1M1809.2 81.5L1810.2 85.8M1825.1 81.3L1826.4 85.6M1839.1 81.1L1840.7 85.3M1854.0 80.8L1855.8 85.1M1869.9 80.6L1872.1 84.8M1884.1 80.3L1886.5 84.6M1899.0 80.1L1901.7 84.4M1491.3 91.1L1485.9 95.7M1506.6 90.9L1501.5 95.4M1520.5 90.6L1515.7 95.2M1535.8 90.4L1531.3 94.9M1550.5 90.1L1546.3 94.7M1565.5 89.9L1561.6 94.4M1580.9 89.6L1577.3 94.2M1595.3 89.4L1592.0 93.9M1610.4 89.1L1607.4 93.6M1625.3 88.9L1622.5 93.4M1641.3 88.6L1638.9 93.1M1655.7 88.4L1653.6 92.9M1671.1 88.1L1669.3 92.6M1686.2 87.9L1684.7 92.3M1699.5 87.7L1698.3 92.1M1715.2 87.4L1714.3 91.8M1731.1 87.1L1730.5 91.6M1745.8 86.9L1745.5 91.3M1759.0 86.7L1759.0 91.1M1774.0 86.4L1774.3 90.8M1789.7 86.2L1790.3 90.5M1803.8 85.9L1804.7 90.3M1819.1 85.7L1820.3 90.0M1833.7 85.4L1835.2 89.8M1850.1 85.2L1851.9 89.5M1865.3 84.9L1867.4 89.2M1880.5 84.7L1882.9 89.0M1893.7 84.4L1896.4 88.7M1910.0 84.2L1913.0 88.5M1496.8 95.6L1491.4 100.3M1510.7 95.4L1505.6 100.0M1527.6 95.1L1522.8 99.7M1542.9 94.8L1538.5 99.4M1556.3 94.6L1552.1 99.2M1573.2 94.3L1569.4 98.9M1587.0 94.1L1583.5 98.6M1602.3 93.8L1599.1 98.4M1618.7 93.5L1615.8 98.1M1633.5 93.2L1630.9 97.8M1647.0 93.0L1644.7 97.6M1662.8 92.7L1660.8 97.3M1678.1 92.5L1676.4 97.0M1692.8 92.2L1691.5 96.7M1707.6 92.0L1706.6 96.5M1723.1 91.7L1722.3 96.2M1739.2 91.4L1738.7 95.9M1752.6 91.2L1752.5 95.6M1769.1 90.9L1769.2 95.3M1783.9 90.6L1784.4 95.1M1798.0 90.4L1798.8 94.8M1813.9 90.1L1815.0 94.5M1829.8 89.8L1831.2 94.2M1844.7 89.6L1846.4 94.0M1858.7 89.3L1860.8 93.7M1876.1 89.0L1878.4 93.4M1890.7 88.8L1893.4 93.1M1906.3 88.5L1909.3 92.9M1486.0 100.5L1480.3 105.2M1501.7 100.2L1496.3 104.9M1516.4 99.9L1511.4 104.6M1533.6 99.6L1528.9 104.3M1547.7 99.4L1543.3 104.0M1562.6 99.1L1558.6 103.7M1578.7 98.8L1574.9 103.4M1595.2 98.5L1591.8 103.1M1610.3 98.2L1607.2 102.8M1624.3 98.0L1621.5 102.6M1639.3 97.7L1636.9 102.3M1656.5 97.4L1654.3 102.0M1671.0 97.1L1669.2 101.7M1686.6 96.8L1685.1 101.4M1700.5 96.6L1699.3 101.1M1715.7 96.3L1714.9 100.8M1732.6 96.0L1732.0 100.5M1747.3 95.7L1747.0 100.2M1761.8 95.5L1761.8 100.0M1779.2 95.2L1779.5 99.6M1793.8 94.9L1794.5 99.4M1809.5 94.6L1810.5 99.1M1823.1 94.4L1824.4 98.8M1840.3 94.0L1841.9 98.5M1853.7 93.8L1855.7 98.2M1870.9 93.5L1873.2 97.9M1885.3 93.2L1887.9 97.6M1900.3 93.0L1903.2 97.4M1492.8 105.1L1487.2 109.8M1509.2 104.8L1504.0 109.5M1523.2 104.5L1518.2 109.2M1538.3 104.2L1533.7 108.9M1554.8 103.9L1550.5 108.6M1569.6 103.6L1565.7 108.3M1584.8 103.3L1581.2 108.0M1600.5 103.0L1597.2 107.7M1615.7 102.7L1612.7 107.4M1631.6 102.4L1628.9 107.1M1647.4 102.1L1645.1 106.8M1662.9 101.8L1660.9 106.5M1679.5 101.5L1677.8 106.2M1693.9 101.3L1692.5 105.9M1709.9 101.0L1708.9 105.6M1724.6 100.7L1723.9 105.3M1740.6 100.4L1740.2 105.0M1755.3 100.1L1755.2 104.7M1771.4 99.8L1771.6 104.3M1786.3 99.5L1786.9 104.1M1803.6 99.2L1804.5 103.7M1818.6 98.9L1819.9 103.4M1833.3 98.6L1834.8 103.1M1849.5 98.3L1851.4 102.8M1866.1 98.0L1868.3 102.5M1879.6 97.7L1882.1 102.2M1896.9 97.4L1899.7 101.9M1911.4 97.1L1914.6 101.6M1498.6 109.7L1493.1 114.5M1515.1 109.4L1509.9 114.2M1529.8 109.1L1524.9 113.9M1545.8 108.8L1541.2 113.6M1561.9 108.5L1557.7 113.2M1578.3 108.1L1574.4 112.9M1592.5 107.9L1588.9 112.6M1609.4 107.5L1606.2 112.3M1624.8 107.2L1621.9 112.0M1640.3 106.9L1637.8 111.6M1655.5 106.6L1653.2 111.3M1671.0 106.3L1669.1 111.0M1686.0 106.0L1684.5 110.7M1701.9 105.7L1700.7 110.4M1717.5 105.4L1716.6 110.1M1734.8 105.1L1734.2 109.7M1749.3 104.8L1749.1 109.4M1764.8 104.5L1764.9 109.1M1780.3 104.2L1780.8 108.8M1797.9 103.8L1798.6 108.4M1813.6 103.5L1814.7 108.1M1828.9 103.2L1830.3 107.8M1843.6 102.9L1845.4 107.5M1859.2 102.6L1861.4 107.2M1875.1 102.3L1877.5 106.8M1891.2 102.0L1894.0 106.5M1906.2 101.7L1909.3 106.2M1488.7 114.7L1482.9 119.6M1504.1 114.4L1498.7 119.3M1521.7 114.1L1516.6 118.9M1537.6 113.7L1532.8 118.6M1552.5 113.4L1548.1 118.3M1567.7 113.1L1563.6 118.0M1585.3 112.8L1581.5 117.6M1599.6 112.5L1596.2 117.3M1615.6 112.1L1612.6 116.9M1630.7 111.8L1627.9 116.6M1647.5 111.5L1645.1 116.3M1663.6 111.2L1661.6 115.9M1679.6 110.8L1677.9 115.6M1694.8 110.5L1693.4 115.2M1711.4 110.2L1710.4 114.9M1726.1 109.9L1725.4 114.6M1742.6 109.5L1742.3 114.2M1758.1 109.2L1758.1 113.9M1774.7 108.9L1775.1 113.5M1789.8 108.6L1790.4 113.2M1805.6 108.3L1806.6 112.9M1822.2 107.9L1823.6 112.5M1837.9 107.6L1839.6 112.2M1854.7 107.2L1856.7 111.8M1870.4 106.9L1872.8 111.5M1886.9 106.6L1889.6 111.2M1902.6 106.3L1905.6 110.8M1495.3 119.5L1489.6 124.4M1511.8 119.1L1506.4 124.1M1526.7 118.8L1521.7 123.8M1542.7 118.5L1538.0 123.4M1560.4 118.1L1556.0 123.0M1574.5 117.8L1570.5 122.7M1591.9 117.4L1588.3 122.3M1607.8 117.1L1604.5 122.0M1622.5 116.8L1619.5 121.6M1640.5 116.4L1637.9 121.2M1656.7 116.1L1654.5 120.9M1672.2 115.7L1670.3 120.5M1688.5 115.4L1687.0 120.2M1704.8 115.0L1703.6 119.8M1719.3 114.7L1718.4 119.5M1736.3 114.4L1735.8 119.1M1752.3 114.0L1752.2 118.8M1769.2 113.7L1769.4 118.4M1785.3 113.3L1785.8 118.0M1801.4 113.0L1802.3 117.7M1816.9 112.6L1818.1 117.3M1833.8 112.3L1835.3 117.0M1849.3 112.0L1851.3 116.6M1865.5 111.6L1867.7 116.3M1880.4 111.3L1883.1 115.9M1896.1 111.0L1899.0 115.6M1912.4 110.6L1915.7 115.2M1500.7 124.3L1495.0 129.3M1516.3 124.0L1511.0 129.0M1534.4 123.6L1529.4 128.6M1550.0 123.2L1545.4 128.2M1566.5 122.9L1562.2 127.8M1582.8 122.5L1578.9 127.4M1599.2 122.1L1595.6 127.1M1615.0 121.8L1611.8 126.7M1630.1 121.5L1627.3 126.4M1648.3 121.1L1645.9 125.9M1664.5 120.7L1662.4 125.6M1680.2 120.4L1678.5 125.2M1696.6 120.0L1695.2 124.8M1713.2 119.6L1712.1 124.5M1728.0 119.3L1727.4 124.1M1745.9 118.9L1745.6 123.7M1761.1 118.6L1761.1 123.4M1776.9 118.2L1777.3 123.0M1793.7 117.8L1794.4 122.6M1811.1 117.5L1812.2 122.2M1826.1 117.1L1827.6 121.9M1843.7 116.7L1845.5 121.5M1860.6 116.4L1862.8 121.1M1875.7 116.0L1878.2 120.7M1891.7 115.7L1894.6 120.4M1908.3 115.3L1911.5 120.0M1491.3 129.5L1485.3 134.6M1508.0 129.2L1502.3 134.2M1524.1 128.8L1518.8 133.8M1540.6 128.4L1535.8 133.4M1555.8 128.1L1551.3 133.1M1572.4 127.7L1568.3 132.7M1589.2 127.3L1585.4 132.3M1606.9 126.9L1603.4 131.9M1622.3 126.5L1619.2 131.5M1639.4 126.1L1636.7 131.1M1654.6 125.8L1652.3 130.7M1671.2 125.4L1669.2 130.3M1688.2 125.0L1686.6 129.9M1705.6 124.6L1704.4 129.5M1722.2 124.2L1721.3 129.1M1738.6 123.9L1738.2 128.7M1754.2 123.5L1754.1 128.4M1771.2 123.1L1771.5 128.0M1787.6 122.7L1788.2 127.6M1804.1 122.4L1805.1 127.2M1819.8 122.0L1821.1 126.8M1838.1 121.6L1839.8 126.4M1852.9 121.2L1855.0 126.0M1871.3 120.8L1873.7 125.6M1887.7 120.4L1890.5 125.2M1902.0 120.1L1905.2 124.9M1497.0 134.5L1491.1 139.6M1514.6 134.1L1509.0 139.2M1531.6 133.7L1526.5 138.8M1547.1 133.3L1542.3 138.4M1563.3 132.9L1558.9 138.0M1579.9 132.5L1575.8 137.6M1598.3 132.1L1594.7 137.1M1613.3 131.7L1610.0 136.8M1630.9 131.3L1627.9 136.3M1646.5 130.9L1644.0 135.9M1664.1 130.5L1661.9 135.5M1681.8 130.1L1680.0 135.1M1696.6 129.7L1695.2 134.7M1714.9 129.3L1713.9 134.2M1730.9 128.9L1730.2 133.9M1748.5 128.5L1748.2 133.4M1764.7 128.1L1764.8 133.0M1780.3 127.7L1780.7 132.6M1798.6 127.3L1799.4 132.2M1814.3 126.9L1815.5 131.8M1829.9 126.6L1831.5 131.4M1846.5 126.2L1848.5 131.0M1864.4 125.7L1866.7 130.6M1881.0 125.4L1883.7 130.2M1897.3 125.0L1900.4 129.8M1485.8 139.9L1479.5 145.1M1503.2 139.5L1497.3 144.7M1520.0 139.1L1514.5 144.2M1538.1 138.6L1533.1 143.8M1553.0 138.2L1548.3 143.4M1571.7 137.8L1567.4 142.9M1588.8 137.4L1584.9 142.5M1604.0 137.0L1600.5 142.1M1622.8 136.5L1619.7 141.6M1639.2 136.1L1636.5 141.2M1656.6 135.7L1654.2 140.7M1672.0 135.3L1670.0 140.3M1689.1 134.9L1687.5 139.9M1706.1 134.5L1704.8 139.5M1724.4 134.0L1723.6 139.0M1740.3 133.6L1739.9 138.6M1756.7 133.2L1756.6 138.2M1773.8 132.8L1774.1 137.8M1790.3 132.4L1791.0 137.3M1806.6 132.0L1807.7 136.9M1823.7 131.6L1825.1 136.5M1842.3 131.1L1844.2 136.0M1857.9 130.7L1860.2 135.6M1876.4 130.3L1879.0 135.1M1891.6 129.9L1894.6 134.7M1908.6 129.5L1912.0 134.3M1493.0 144.9L1486.9 150.2M1509.4 144.5L1503.6 149.7M1526.9 144.1L1521.5 149.3M1545.4 143.6L1540.4 148.8M1562.4 143.1L1557.8 148.3M1579.3 142.7L1575.1 147.9M1596.0 142.3L1592.2 147.5M1613.7 141.8L1610.3 147.0M1630.9 141.4L1627.9 146.5M1647.1 141.0L1644.5 146.1M1664.6 140.5L1662.4 145.7M1680.1 140.1L1678.3 145.2M1698.8 139.7L1697.4 144.7M1715.3 139.2L1714.3 144.3M1733.1 138.8L1732.5 143.8M1750.0 138.4L1749.7 143.4M1766.2 137.9L1766.4 143.0M1782.7 137.5L1783.3 142.5M1802.0 137.0L1802.9 142.0M1817.1 136.6L1818.5 141.6M1835.1 136.2L1836.8 141.2M1851.9 135.8L1854.0 140.7M1868.9 135.3L1871.4 140.3M1887.0 134.9L1890.0 139.8M1904.7 134.4L1908.0 139.3M1499.0 150.0L1492.9 155.3M1517.2 149.5L1511.5 154.8M1533.7 149.1L1528.4 154.4M1551.6 148.6L1546.8 153.9M1568.5 148.2L1564.1 153.4M1585.3 147.7L1581.3 153.0M1602.6 147.3L1599.0 152.5M1620.1 146.8L1616.8 152.0M1639.0 146.3L1636.2 151.5M1655.4 145.9L1652.9 151.1M1672.0 145.5L1670.0 150.6M1691.0 145.0L1689.4 150.1M1708.5 144.5L1707.3 149.6M1724.5 144.1L1723.7 149.2M1741.1 143.6L1740.7 148.7M1758.6 143.2L1758.5 148.3M1775.6 142.7L1776.0 147.8M1793.5 142.2L1794.3 147.3M1810.3 141.8L1811.5 146.9M1827.9 141.3L1829.5 146.4M1845.3 140.9L1847.3 145.9M1863.4 140.4L1865.8 145.4M1881.4 139.9L1884.3 144.9M1898.4 139.5L1901.6 144.5M1488.5 155.6L1482.1 161.0M1506.0 155.1L1500.0 160.5M1523.8 154.7L1518.2 160.0M1541.0 154.2L1535.8 159.5M1558.4 153.7L1553.7 159.1M1575.3 153.3L1570.9 158.6M1593.3 152.8L1589.4 158.1M1612.5 152.2L1609.0 157.5M1628.0 151.8L1624.9 157.1M1646.5 151.3L1643.8 156.6M1664.3 150.8L1662.0 156.1M1682.4 150.3L1680.5 155.6M1698.4 149.9L1696.9 155.1M1716.0 149.4L1715.0 154.6M1733.5 148.9L1732.9 154.1M1751.4 148.5L1751.2 153.6M1769.0 148.0L1769.3 153.1M1787.8 147.5L1788.4 152.6M1805.1 147.0L1806.1 152.1M1822.6 146.5L1824.1 151.6M1838.1 146.1L1840.0 151.2M1855.7 145.6L1858.0 150.7M1874.8 145.1L1877.5 150.1M1892.8 144.6L1895.9 149.6M1909.3 144.2L1912.9 149.2M1495.5 160.8L1489.2 166.3M1511.9 160.4L1506.0 165.8M1530.6 159.8L1525.1 165.3M1549.6 159.3L1544.5 164.7M1567.1 158.8L1562.5 164.2M1584.9 158.3L1580.7 163.7M1602.9 157.8L1599.1 163.2M1618.9 157.4L1615.6 162.7M1636.3 156.9L1633.4 162.2M1654.2 156.4L1651.7 161.7M1672.8 155.8L1670.7 161.1M1691.0 155.3L1689.3 160.6M1709.3 154.8L1708.1 160.1M1726.5 154.3L1725.7 159.6M1744.1 153.8L1743.7 159.1M1762.1 153.3L1762.2 158.5M1779.1 152.8L1779.6 158.0M1797.1 152.3L1798.0 157.5M1813.6 151.9L1814.9 157.0M1833.2 151.3L1834.9 156.5M1849.6 150.9L1851.7 156.0M1869.0 150.3L1871.6 155.4M1886.1 149.8L1889.1 154.9M1903.0 149.4L1906.4 154.4M1501.2 166.1L1495.0 171.6M1519.5 165.6L1513.7 171.1M1538.4 165.0L1533.0 170.5M1556.5 164.5L1551.5 170.0M1573.0 164.0L1568.5 169.5M1590.9 163.5L1586.8 168.9M1610.0 163.0L1606.3 168.4M1628.1 162.4L1624.9 167.8M1645.6 161.9L1642.8 167.3M1663.1 161.4L1660.8 166.8M1682.0 160.9L1680.1 166.2M1698.5 160.4L1697.1 165.7M1717.2 159.8L1716.2 165.2M1735.5 159.3L1734.9 164.6M1754.7 158.7L1754.5 164.0M1771.9 158.2L1772.2 163.5M1790.4 157.7L1791.2 163.0M1807.4 157.2L1808.6 162.5M1824.8 156.7L1826.4 161.9M1842.8 156.2L1844.8 161.4M1862.5 155.6L1864.9 160.8M1879.8 155.1L1882.7 160.3M1896.8 154.6L1900.2 159.8M1489.8 172.0L1483.2 177.6M1509.1 171.4L1502.9 177.0M1527.7 170.8L1522.0 176.4M1545.3 170.3L1540.0 175.9M1563.0 169.8L1558.2 175.3M1582.2 169.2L1577.8 174.7M1601.0 168.6L1597.1 174.1M1617.5 168.1L1614.0 173.6M1635.2 167.6L1632.2 173.1M1654.2 167.1L1651.6 172.5M1672.5 166.5L1670.4 171.9M1691.3 165.9L1689.7 171.3M1708.4 165.4L1707.1 170.8M1728.0 164.8L1727.2 170.2M1746.0 164.3L1745.7 169.7M1763.7 163.8L1763.7 169.1M1781.1 163.2L1781.6 168.6M1801.1 162.6L1802.1 168.0M1817.7 162.1L1819.2 167.4M1837.1 161.6L1839.0 166.8M1853.9 161.1L1856.2 166.3M1872.1 160.5L1874.8 165.8M1891.5 159.9L1894.8 165.2M1908.6 159.4L1912.3 164.6M1498.9 177.3L1492.4 183.0M1516.2 176.8L1510.2 182.4M1533.9 176.2L1528.3 181.8M1552.4 175.6L1547.2 181.2M1571.2 175.1L1566.5 180.6M1590.2 174.5L1586.0 180.0M1609.3 173.9L1605.5 179.4M1625.8 173.4L1622.5 178.9M1644.8 172.8L1641.9 178.3M1662.8 172.2L1660.4 177.7M1683.0 171.6L1681.1 177.1M1699.4 171.1L1697.9 176.6M1717.6 170.5L1716.6 176.0M1736.0 170.0L1735.5 175.4M1755.2 169.4L1755.1 174.8M1774.8 168.8L1775.2 174.2M1793.2 168.2L1794.0 173.6M1811.3 167.6L1812.5 173.0M1830.3 167.0L1832.0 172.4M1848.5 166.5L1850.7 171.8M1865.5 166.0L1868.1 171.3M1883.6 165.4L1886.7 170.7M1903.8 164.8L1907.3 170.1M1505.5 182.7L1499.1 188.5M1522.4 182.2L1516.4 187.9M1542.5 181.6L1537.1 187.2M1560.5 181.0L1555.5 186.7M1579.1 180.4L1574.6 186.0M1597.6 179.8L1593.6 185.4M1615.9 179.2L1612.3 184.8M1634.1 178.6L1631.0 184.2M1653.4 178.0L1650.7 183.6M1672.2 177.4L1670.0 183.0M1692.3 176.8L1690.6 182.3M1708.9 176.3L1707.7 181.8M1729.6 175.6L1728.8 181.1M1746.4 175.1L1746.1 180.6M1765.4 174.5L1765.5 179.9M1785.1 173.8L1785.7 179.3M1803.7 173.2L1804.8 178.7M1821.4 172.7L1823.0 178.1M1839.2 172.1L1841.2 177.5M1858.8 171.5L1861.3 176.9M1877.2 170.9L1880.1 176.3M1897.1 170.3L1900.6 175.6" stroke="#2b3134" stroke-width="1.1" fill="none"/></g>
<polygon points="1513,169 1901.3,156.5 1901,160.5 1513,172.3" fill="#363f43"/>
<polygon points="1609.4,61.2 1691.2,66.2 1695,103.6 1600,100.3" fill="#5b5b5b"/>
<polygon points="1615.1,65.9 1685,69.6 1688.7,98.3 1608.2,95.8" fill="url(#glass)"/>
<polygon points="1583.3,163.6 1585.5,163.3 1594,272 1591,272" fill="#c6c6c2"/>
<polygon points="1585.1,163.3 1705.2,161 1706.8,262.2 1593.3,274.6" fill="#4b4b47"/>
<polygon points="1592.2,169 1701.3,165.7 1702.4,258.3 1598,270" fill="#a2a7a2"/>
<g clip-path="url(#winc)"><polygon points="1590,160 1637,160 1643,272 1590,272" fill="#7d8b7b"/><polygon points="1590,160 1636,160 1636,182 1590,183.500" fill="#c3ccbe"/><polygon points="1636,160 1705,160 1705,178 1636,181" fill="#e6e6e4"/><polygon points="1650,215 1672,205 1700,196 1702,214 1672,222 1655,228" fill="#93a4a6" opacity=".6"/><polygon points="1598,246 1640,243 1644,272 1600,272" fill="#8a9888"/></g>
<path d="M1593.5 202.4L1702 196.2M1596 238.500L1702.500 229" stroke="#4a4a46" stroke-width="2.600" fill="none"/>
</svg>
<div class="vbtn" style="left:89px;width:92px;top:200px;height:22px"></div>
<div class="vbtn" style="left:195.400px;width:60.400px;top:200px;height:22px"></div>
<div class="vbtn" style="left:270px;width:30px;top:200px;height:22px"></div>
<svg class="abs" style="left:0;top:0" width="394" height="222" viewBox="1513 50 394 222" fill="none" stroke="#fff" stroke-width="1.200" stroke-linecap="round" stroke-linejoin="round"><path d="M1632.600 253.500V269M1663.400 253.500V269M1738.600 253.500V269" stroke="#999" stroke-width="1"/><circle cx="1617" cy="257.500" r="3.800"/><path d="M1610.500 267.500Q1611 262.500 1615 262L1617 264.500L1619 262Q1623 262.500 1623.500 267.500Z"/><path d="M1641 257.500L1649.500 254.500L1656 257.500V262.500L1647.500 266L1641 263ZM1641 257.500L1647.500 260.500L1656 257.500M1647.500 260.500V266" stroke="#12aaa3" stroke-width="1.100"/><path d="M1673.500 254.500H1684.500V259.500H1678.500V268.500H1673.500ZM1676 254.500V268.500M1678.500 257H1684.500"/><circle cx="1720.800" cy="258.300" r="4.200"/><path d="M1724 261.500L1728 266" stroke-width="1.600"/><path d="M1718.800 258.300H1722.800M1720.800 256.300V260.300" stroke-width="1.300"/><circle cx="1751.800" cy="258.300" r="4.200"/><path d="M1755 261.500L1759 266" stroke-width="1.600"/><path d="M1749.800 258.300H1753.800" stroke-width="1.300"/><rect x="1793.300" y="254" width="9.400" height="13.500" rx="4.700" stroke="#ddd"/><path d="M1798 254V259.500M1793.300 259.500H1802.700" stroke="#ddd" stroke-width="1"/></svg>
</div>
<div id="side"></div>
</body>
</html>
